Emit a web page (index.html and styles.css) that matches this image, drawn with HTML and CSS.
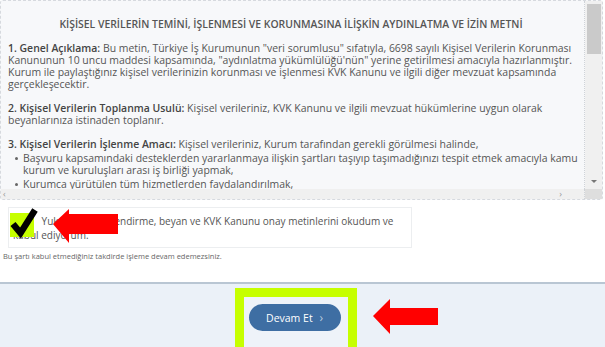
FILE: index.html
```html
<!DOCTYPE html>
<html lang="tr">
<head>
    <meta charset="UTF-8">
    <meta name="viewport" content="width=device-width, initial-scale=1.0">
    <title>Aydınlatma ve İzin Metni</title>
    <link rel="stylesheet" href="styles.css">
</head>
<body>
    <div class="page">
        <!-- Metin kutusu -->
        <div class="terms">
            <div class="terms-body">
                <h4>KİŞİSEL VERİLERİN TEMİNİ, İŞLENMESİ VE KORUNMASINA İLİŞKİN AYDINLATMA VE İZİN METNİ</h4>
                <p><strong>1. Genel Açıklama:</strong> Bu metin, Türkiye İş Kurumunun "veri sorumlusu" sıfatıyla, 6698 sayılı Kişisel Verilerin Korunması Kanununun 10 uncu maddesi kapsamında, "aydınlatma yükümlülüğü'nün" yerine getirilmesi amacıyla hazırlanmıştır. Kurum ile paylaştığınız kişisel verilerinizin korunması ve işlenmesi KVK Kanunu ve ilgili diğer mevzuat kapsamında gerçekleşecektir.</p>
                <p><strong>2. Kişisel Verilerin Toplanma Usulü:</strong> Kişisel verileriniz, KVK Kanunu ve ilgili mevzuat hükümlerine uygun olarak beyanlarınıza istinaden toplanır.</p>
                <p class="tight"><strong>3. Kişisel Verilerin İşlenme Amacı:</strong> Kişisel verileriniz, Kurum tarafından gerekli görülmesi halinde,</p>
                <ul>
                    <li>Başvuru kapsamındaki desteklerden yararlanmaya ilişkin şartları taşıyıp taşımadığınızı tespit etmek amacıyla kamu kurum ve kuruluşları arası iş birliği yapmak,</li>
                    <li>Kurumca yürütülen tüm hizmetlerden faydalandırılmak,</li>
                </ul>
            </div>
            <div class="vbar">
                <div class="thumb"></div>
                <span class="down"></span>
            </div>
            <div class="hbar">
                <span>&#8249;</span>
                <span>&#8250;</span>
            </div>
            <div class="corner"></div>
        </div>

        <!-- Onay -->
        <div class="consent">
            <label class="consent-box">
                <span class="check">
                    <svg width="28" height="32" viewBox="0 0 28 32">
                        <rect x="0" y="7" width="24" height="24" fill="#c6ff00"/>
                        <path d="M3 18 L10.5 27 L25 4" fill="none" stroke="#000" stroke-width="6.5"/>
                    </svg>
                </span>
                Yukarıdaki bilgilendirme, beyan ve KVK Kanunu onay metinlerini okudum ve kabul ediyorum.
            </label>
            <div class="hint">Bu şartı kabul etmediğiniz takdirde işleme devam edemezsiniz.</div>

            <svg class="arrow arrow-check" width="66" height="36" viewBox="0 0 66 36">
                <polygon points="0,16 16,1 16,6 65,6 65,26 16,26 16,35" fill="#ff0000"/>
            </svg>
        </div>

        <!-- Alt bar -->
        <div class="footer">
            <div class="highlight">
                <button class="btn-next">Devam Et <span class="chev">&#8250;</span></button>
            </div>
            <svg class="arrow arrow-btn" width="66" height="36" viewBox="0 0 66 36">
                <polygon points="0,17 17,0 17,9 65,9 65,26 17,26 17,35" fill="#ff0000"/>
            </svg>
        </div>
    </div>
</body>
</html>
```

FILE: styles.css
```css
body {
    margin: 0;
    font-family: "Open Sans", Arial, sans-serif;
    color: #555;
    background-color: #fff;
}

.page {
    width: 605px;
    height: 347px;
    overflow: hidden;
    position: relative;
}

.terms {
    box-sizing: border-box;
    width: 603px;
    height: 200px;
    display: grid;
    grid-template-columns: 1fr 17px;
    grid-template-rows: 1fr 10px;
    background-color: #f7f8fa;
    border: 1px dashed #d6d9de;
    border-radius: 3px;
}

.terms-body {
    overflow: hidden;
    padding: 17px 2px 0 7px;
    border-right: 1px dotted #cfd3d8;
    font-size: 10.45px;
    line-height: 12px;
}

.vbar {
    position: relative;
    background-color: #f0f0f0;
}

.vbar .thumb {
    margin: 3px 1px 0 2px;
    height: 50px;
    background-color: #cacaca;
}

.vbar .down {
    position: absolute;
    left: 6px;
    bottom: 6px;
    border-left: 3px solid transparent;
    border-right: 3px solid transparent;
    border-top: 3px solid #777;
}

.hbar {
    display: flex;
    justify-content: space-between;
    align-items: center;
    padding: 0 22px 0 2px;
    background-color: #f0f0f0;
    border-right: 1px dotted #cfd3d8;
    font-size: 9px;
    line-height: 10px;
    color: #999;
}

.corner {
    background-color: #dedede;
}

.terms h4 {
    margin: 0 0 12px;
    padding-right: 8px;
    text-align: center;
    font-size: 10.4px;
    font-weight: 600;
    color: #555;
}

.terms p {
    margin: 0 0 12px;
}

.terms p.tight {
    margin-bottom: 2px;
}

.terms strong {
    font-weight: 600;
    color: #444;
}

.terms ul {
    margin: 0;
    padding-left: 15px;
}

.terms li {
    list-style: none;
    position: relative;
}

.terms li + li {
    margin-top: 2px;
}

.terms li::before {
    content: "";
    position: absolute;
    left: -8px;
    top: 5px;
    width: 3px;
    height: 3px;
    border-radius: 50%;
    background-color: #666;
}

.consent {
    position: relative;
    height: 82px;
    padding-top: 7px;
    box-sizing: border-box;
}

.consent-box {
    display: block;
    width: 392px;
    margin-left: 8px;
    padding: 6px 6px 5px 4px;
    border: 1px solid #eceef0;
    font-size: 10px;
    line-height: 14px;
    color: #555;
}

.check {
    display: inline-block;
    width: 24px;
    height: 14px;
    vertical-align: top;
    position: relative;
    margin-right: 2px;
}

.check svg {
    position: absolute;
    left: -3px;
    top: -8px;
}

.hint {
    margin: 3px 0 0 3px;
    font-size: 7.5px;
    color: #666;
}

.arrow {
    position: absolute;
}

.arrow-check {
    left: 53px;
    top: 8px;
}

.footer {
    display: flex;
    justify-content: center;
    padding: 4px 14px 0 0;
    height: 65px;
    box-sizing: border-box;
    position: relative;
    background-color: #ebf1f8;
    border-top: 2px solid #b9c6d3;
}

.highlight {
    border: 9px solid #c6ff00;
    border-bottom: none;
    padding: 7px 7px 12px 5px;
    background-color: #eef3f9;
}

.btn-next {
    width: 92px;
    height: 27px;
    border: none;
    border-radius: 14px;
    background-color: #3e6ea3;
    color: #fff;
    font-family: "Open Sans", Arial, sans-serif;
    font-size: 10.5px;
    cursor: pointer;
}

.chev {
    color: #b8c9de;
    margin-left: 4px;
    font-size: 12px;
}

.arrow-btn {
    left: 373px;
    top: 15px;
}
```
